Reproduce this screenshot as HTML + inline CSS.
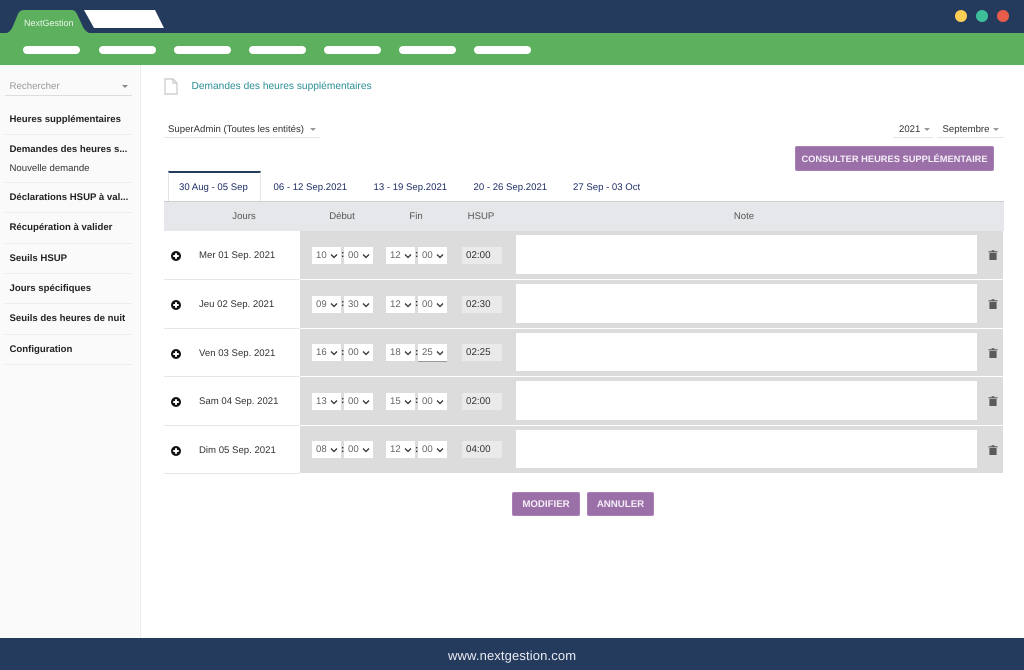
<!DOCTYPE html>
<html lang="fr">
<head>
<meta charset="utf-8">
<title>NextGestion</title>
<style>
html,body{margin:0;padding:0;background:#fff}
body{width:1024px;height:670px;position:relative;overflow:hidden;font-family:"Liberation Sans",sans-serif;color:#333;text-rendering:geometricPrecision}
.a{position:absolute}
.pill{position:absolute;top:46px;width:57px;height:8px;border-radius:4px;background:#fff}
.dot{position:absolute;top:10px;width:12px;height:12px;border-radius:50%}
.mi{position:absolute;left:9.5px;font-size:9.6px;font-weight:bold;color:#222;white-space:nowrap;line-height:13px}
.ln{position:absolute;left:5px;width:127px;height:1px;background:#ececec}
.t{position:absolute;white-space:nowrap;line-height:13px}
.car{position:absolute;width:0;height:0;border-left:3px solid transparent;border-right:3px solid transparent;border-top:3px solid #999}
.tab{position:absolute;top:181px;font-size:9.6px;color:#1f2f66;white-space:nowrap;line-height:13px}
.th{position:absolute;top:210px;font-size:9.6px;color:#555;line-height:13px;text-align:center}
.btn{position:absolute;background:#9b6fa8;border-radius:2px;color:#f4eef6;font-weight:bold;font-size:9.7px;text-align:center;box-sizing:border-box;border:1px solid #a880b3}
.row{position:absolute;left:164px;width:839px;height:47.5px}
.row .bg{position:absolute;left:136px;top:0;width:703px;height:47.5px;background:#dcdcdc}
.row .rl{position:absolute;left:0;top:47.5px;width:136px;height:1px;background:#e6e6e6}
.row .d{position:absolute;left:35px;top:18px;font-size:9.6px;line-height:13px;color:#333;white-space:nowrap}
.plus{position:absolute;left:7px;top:20px;width:10px;height:10px}
.s{position:absolute;top:15.5px;height:17px;width:29px;background:#fff;font-size:9.6px;line-height:18px;color:#666;text-indent:4px}
.s svg{position:absolute;right:3px;top:6px;width:8px;height:6px}
.c{position:absolute;top:16px;font-size:10px;font-weight:bold;line-height:16px;color:#333}
.h{position:absolute;left:298px;top:15.5px;width:40px;height:17px;background:#eaeaea;font-size:9.8px;line-height:18px;color:#333;text-indent:4px}
.n{position:absolute;left:352px;top:4px;width:461px;height:38.5px;background:#fff}
.tr{position:absolute;left:824px;top:19px;width:10px;height:10px}
</style>
</head>
<body>
<!-- top bar -->
<div class="a" style="left:0;top:0;width:1024px;height:33px;background:#253b5e"></div>
<div class="a" style="left:0;top:33px;width:1024px;height:32px;background:#5cb05e"></div>
<svg class="a" style="left:0;top:0" width="170" height="34">
<path d="M7 33 Q11 31 13 26 L18 14 Q20 10 24 10 L72 10 Q75 10 77 14 L83 27 Q85 31 89 33 Z" fill="#5cb05e"/>
<path d="M84 10 L155 10 L164 28 L94 28 Z" fill="#fff"/>
</svg>
<div class="t" style="left:24px;top:17px;font-size:9px;color:#eaf5ea">NextGestion</div>
<div class="pill" style="left:23px"></div>
<div class="pill" style="left:99px"></div>
<div class="pill" style="left:174px"></div>
<div class="pill" style="left:249px"></div>
<div class="pill" style="left:324px"></div>
<div class="pill" style="left:399px"></div>
<div class="pill" style="left:474px"></div>
<div class="dot" style="left:955px;background:#fbcf56"></div>
<div class="dot" style="left:976px;background:#3dbf9c"></div>
<div class="dot" style="left:997px;background:#e85c4a"></div>

<!-- sidebar -->
<div class="a" style="left:0;top:65px;width:140px;height:573px;background:#fafafa;border-right:1px solid #eeeeee"></div>
<div class="t" style="left:9.5px;top:80px;font-size:9.7px;color:#999">Rechercher</div>
<div class="car" style="left:122px;top:85px;border-top-color:#888"></div>
<div class="a" style="left:5px;top:95px;width:127px;height:1px;background:#ddd"></div>
<div class="mi" style="top:113px">Heures supplémentaires</div>
<div class="ln" style="top:134px"></div>
<div class="mi" style="top:143px">Demandes des heures s...</div>
<div class="t" style="left:9.5px;top:162px;font-size:9.6px;color:#333">Nouvelle demande</div>
<div class="ln" style="top:182px"></div>
<div class="mi" style="top:191px">Déclarations HSUP à val...</div>
<div class="ln" style="top:212px"></div>
<div class="mi" style="top:221px">Récupération à valider</div>
<div class="ln" style="top:243px"></div>
<div class="mi" style="top:252px">Seuils HSUP</div>
<div class="ln" style="top:273px"></div>
<div class="mi" style="top:282px">Jours spécifiques</div>
<div class="ln" style="top:303px"></div>
<div class="mi" style="top:312px">Seuils des heures de nuit</div>
<div class="ln" style="top:334px"></div>
<div class="mi" style="top:343px">Configuration</div>
<div class="ln" style="top:364px"></div>

<!-- title -->
<svg class="a" style="left:164px;top:78px" width="14" height="17" viewBox="0 0 14 17">
<path d="M1 1 H9 L13 5 V16 H1 Z M9 1 V5 H13" fill="none" stroke="#cfcfcf" stroke-width="1.4"/>
</svg>
<div class="t" style="left:191.5px;top:80px;font-size:10.2px;color:#2a8f96">Demandes des heures supplémentaires</div>

<!-- filters -->
<div class="t" style="left:168px;top:123px;font-size:9.6px;color:#333">SuperAdmin (Toutes les entités)</div>
<div class="car" style="left:310px;top:128px"></div>
<div class="a" style="left:164px;top:137px;width:156px;height:1px;background:#e6e6e6"></div>
<div class="t" style="left:899px;top:123px;font-size:9.6px;color:#333">2021</div>
<div class="car" style="left:924px;top:128px"></div>
<div class="a" style="left:893px;top:137px;width:40px;height:1px;background:#e6e6e6"></div>
<div class="t" style="left:942.5px;top:123px;font-size:9.6px;color:#333">Septembre</div>
<div class="car" style="left:993px;top:128px"></div>
<div class="a" style="left:937px;top:137px;width:67px;height:1px;background:#e6e6e6"></div>
<div class="btn" style="left:795px;top:146px;width:199px;height:25px;line-height:24px;font-size:9.3px">CONSULTER HEURES SUPPLÉMENTAIRE</div>

<!-- tabs -->
<div class="a" style="left:168px;top:171px;width:93px;height:31px;box-sizing:border-box;border-top:2px solid #253b5e;border-left:1px solid #e4e4e4;border-right:1px solid #e4e4e4;background:#fff"></div>
<div class="tab" style="left:179px">30 Aug - 05 Sep</div>
<div class="tab" style="left:273.5px">06 - 12 Sep.2021</div>
<div class="tab" style="left:373.5px">13 - 19 Sep.2021</div>
<div class="tab" style="left:473.5px">20 - 26 Sep.2021</div>
<div class="tab" style="left:573px">27 Sep - 03 Oct</div>

<!-- table head -->
<div class="a" style="left:164px;top:201px;width:840px;height:30px;background:#e6e7eb;border-top:1px solid #cfcfcf;box-sizing:border-box"></div>
<div class="th" style="left:224px;width:40px">Jours</div>
<div class="th" style="left:322px;width:40px">Début</div>
<div class="th" style="left:396px;width:40px">Fin</div>
<div class="th" style="left:461px;width:40px">HSUP</div>
<div class="th" style="left:724px;width:40px">Note</div>

<!-- row 1 -->
<div class="row" style="top:231px">
<div class="bg"></div><div class="rl"></div>
<svg class="plus" viewBox="0 0 10 10"><circle cx="5" cy="5" r="5" fill="#111"/><path d="M5 2.2V7.8M2.2 5H7.8" stroke="#fff" stroke-width="2"/></svg>
<div class="d">Mer 01 Sep. 2021</div>
<div class="s" style="left:148px">10<svg viewBox="0 0 8 6"><path d="M1 1.5L4 4.5L7 1.5" fill="none" stroke="#333" stroke-width="1.3"/></svg></div>
<div class="c" style="left:177px">:</div>
<div class="s" style="left:180px">00<svg viewBox="0 0 8 6"><path d="M1 1.5L4 4.5L7 1.5" fill="none" stroke="#333" stroke-width="1.3"/></svg></div>
<div class="s" style="left:222px">12<svg viewBox="0 0 8 6"><path d="M1 1.5L4 4.5L7 1.5" fill="none" stroke="#333" stroke-width="1.3"/></svg></div>
<div class="c" style="left:251px">:</div>
<div class="s" style="left:254px">00<svg viewBox="0 0 8 6"><path d="M1 1.5L4 4.5L7 1.5" fill="none" stroke="#333" stroke-width="1.3"/></svg></div>
<div class="h">02:00</div>
<div class="n"></div>
<svg class="tr" viewBox="0 0 10 10"><path d="M.5 1.2H3.6V.2H6.4V1.2H9.5V2.4H.5ZM1.4 3H8.6V10H1.4Z" fill="#5a5a5a"/></svg>
</div>

<!-- row 2 -->
<div class="row" style="top:280px">
<div class="bg"></div><div class="rl"></div>
<svg class="plus" viewBox="0 0 10 10"><circle cx="5" cy="5" r="5" fill="#111"/><path d="M5 2.2V7.8M2.2 5H7.8" stroke="#fff" stroke-width="2"/></svg>
<div class="d">Jeu 02 Sep. 2021</div>
<div class="s" style="left:148px">09<svg viewBox="0 0 8 6"><path d="M1 1.5L4 4.5L7 1.5" fill="none" stroke="#333" stroke-width="1.3"/></svg></div>
<div class="c" style="left:177px">:</div>
<div class="s" style="left:180px">30<svg viewBox="0 0 8 6"><path d="M1 1.5L4 4.5L7 1.5" fill="none" stroke="#333" stroke-width="1.3"/></svg></div>
<div class="s" style="left:222px">12<svg viewBox="0 0 8 6"><path d="M1 1.5L4 4.5L7 1.5" fill="none" stroke="#333" stroke-width="1.3"/></svg></div>
<div class="c" style="left:251px">:</div>
<div class="s" style="left:254px">00<svg viewBox="0 0 8 6"><path d="M1 1.5L4 4.5L7 1.5" fill="none" stroke="#333" stroke-width="1.3"/></svg></div>
<div class="h">02:30</div>
<div class="n"></div>
<svg class="tr" viewBox="0 0 10 10"><path d="M.5 1.2H3.6V.2H6.4V1.2H9.5V2.4H.5ZM1.4 3H8.6V10H1.4Z" fill="#5a5a5a"/></svg>
</div>

<!-- row 3 -->
<div class="row" style="top:328.5px">
<div class="bg"></div><div class="rl"></div>
<svg class="plus" viewBox="0 0 10 10"><circle cx="5" cy="5" r="5" fill="#111"/><path d="M5 2.2V7.8M2.2 5H7.8" stroke="#fff" stroke-width="2"/></svg>
<div class="d">Ven 03 Sep. 2021</div>
<div class="s" style="left:148px">16<svg viewBox="0 0 8 6"><path d="M1 1.5L4 4.5L7 1.5" fill="none" stroke="#333" stroke-width="1.3"/></svg></div>
<div class="c" style="left:177px">:</div>
<div class="s" style="left:180px">00<svg viewBox="0 0 8 6"><path d="M1 1.5L4 4.5L7 1.5" fill="none" stroke="#333" stroke-width="1.3"/></svg></div>
<div class="s" style="left:222px">18<svg viewBox="0 0 8 6"><path d="M1 1.5L4 4.5L7 1.5" fill="none" stroke="#333" stroke-width="1.3"/></svg></div>
<div class="c" style="left:251px">:</div>
<div class="s" style="left:254px;border-bottom:1px solid #999;box-sizing:content-box">25<svg viewBox="0 0 8 6"><path d="M1 1.5L4 4.5L7 1.5" fill="none" stroke="#333" stroke-width="1.3"/></svg></div>
<div class="h">02:25</div>
<div class="n"></div>
<svg class="tr" viewBox="0 0 10 10"><path d="M.5 1.2H3.6V.2H6.4V1.2H9.5V2.4H.5ZM1.4 3H8.6V10H1.4Z" fill="#5a5a5a"/></svg>
</div>

<!-- row 4 -->
<div class="row" style="top:377px">
<div class="bg"></div><div class="rl"></div>
<svg class="plus" viewBox="0 0 10 10"><circle cx="5" cy="5" r="5" fill="#111"/><path d="M5 2.2V7.8M2.2 5H7.8" stroke="#fff" stroke-width="2"/></svg>
<div class="d">Sam 04 Sep. 2021</div>
<div class="s" style="left:148px">13<svg viewBox="0 0 8 6"><path d="M1 1.5L4 4.5L7 1.5" fill="none" stroke="#333" stroke-width="1.3"/></svg></div>
<div class="c" style="left:177px">:</div>
<div class="s" style="left:180px">00<svg viewBox="0 0 8 6"><path d="M1 1.5L4 4.5L7 1.5" fill="none" stroke="#333" stroke-width="1.3"/></svg></div>
<div class="s" style="left:222px">15<svg viewBox="0 0 8 6"><path d="M1 1.5L4 4.5L7 1.5" fill="none" stroke="#333" stroke-width="1.3"/></svg></div>
<div class="c" style="left:251px">:</div>
<div class="s" style="left:254px">00<svg viewBox="0 0 8 6"><path d="M1 1.5L4 4.5L7 1.5" fill="none" stroke="#333" stroke-width="1.3"/></svg></div>
<div class="h">02:00</div>
<div class="n"></div>
<svg class="tr" viewBox="0 0 10 10"><path d="M.5 1.2H3.6V.2H6.4V1.2H9.5V2.4H.5ZM1.4 3H8.6V10H1.4Z" fill="#5a5a5a"/></svg>
</div>

<!-- row 5 -->
<div class="row" style="top:425.5px">
<div class="bg"></div><div class="rl"></div>
<svg class="plus" viewBox="0 0 10 10"><circle cx="5" cy="5" r="5" fill="#111"/><path d="M5 2.2V7.8M2.2 5H7.8" stroke="#fff" stroke-width="2"/></svg>
<div class="d">Dim 05 Sep. 2021</div>
<div class="s" style="left:148px">08<svg viewBox="0 0 8 6"><path d="M1 1.5L4 4.5L7 1.5" fill="none" stroke="#333" stroke-width="1.3"/></svg></div>
<div class="c" style="left:177px">:</div>
<div class="s" style="left:180px">00<svg viewBox="0 0 8 6"><path d="M1 1.5L4 4.5L7 1.5" fill="none" stroke="#333" stroke-width="1.3"/></svg></div>
<div class="s" style="left:222px">12<svg viewBox="0 0 8 6"><path d="M1 1.5L4 4.5L7 1.5" fill="none" stroke="#333" stroke-width="1.3"/></svg></div>
<div class="c" style="left:251px">:</div>
<div class="s" style="left:254px">00<svg viewBox="0 0 8 6"><path d="M1 1.5L4 4.5L7 1.5" fill="none" stroke="#333" stroke-width="1.3"/></svg></div>
<div class="h">04:00</div>
<div class="n"></div>
<svg class="tr" viewBox="0 0 10 10"><path d="M.5 1.2H3.6V.2H6.4V1.2H9.5V2.4H.5ZM1.4 3H8.6V10H1.4Z" fill="#5a5a5a"/></svg>
</div>

<!-- buttons -->
<div class="btn" style="left:512px;top:492px;width:68px;height:24px;line-height:23px">MODIFIER</div>
<div class="btn" style="left:587px;top:492px;width:67px;height:24px;line-height:23px">ANNULER</div>

<!-- footer -->
<div class="a" style="left:0;top:638px;width:1024px;height:32px;background:#253b5e"></div>
<div class="t" style="left:448px;top:649px;font-size:13px;color:#e8ebf0;letter-spacing:.13px">www.nextgestion.com</div>
</body>
</html>
